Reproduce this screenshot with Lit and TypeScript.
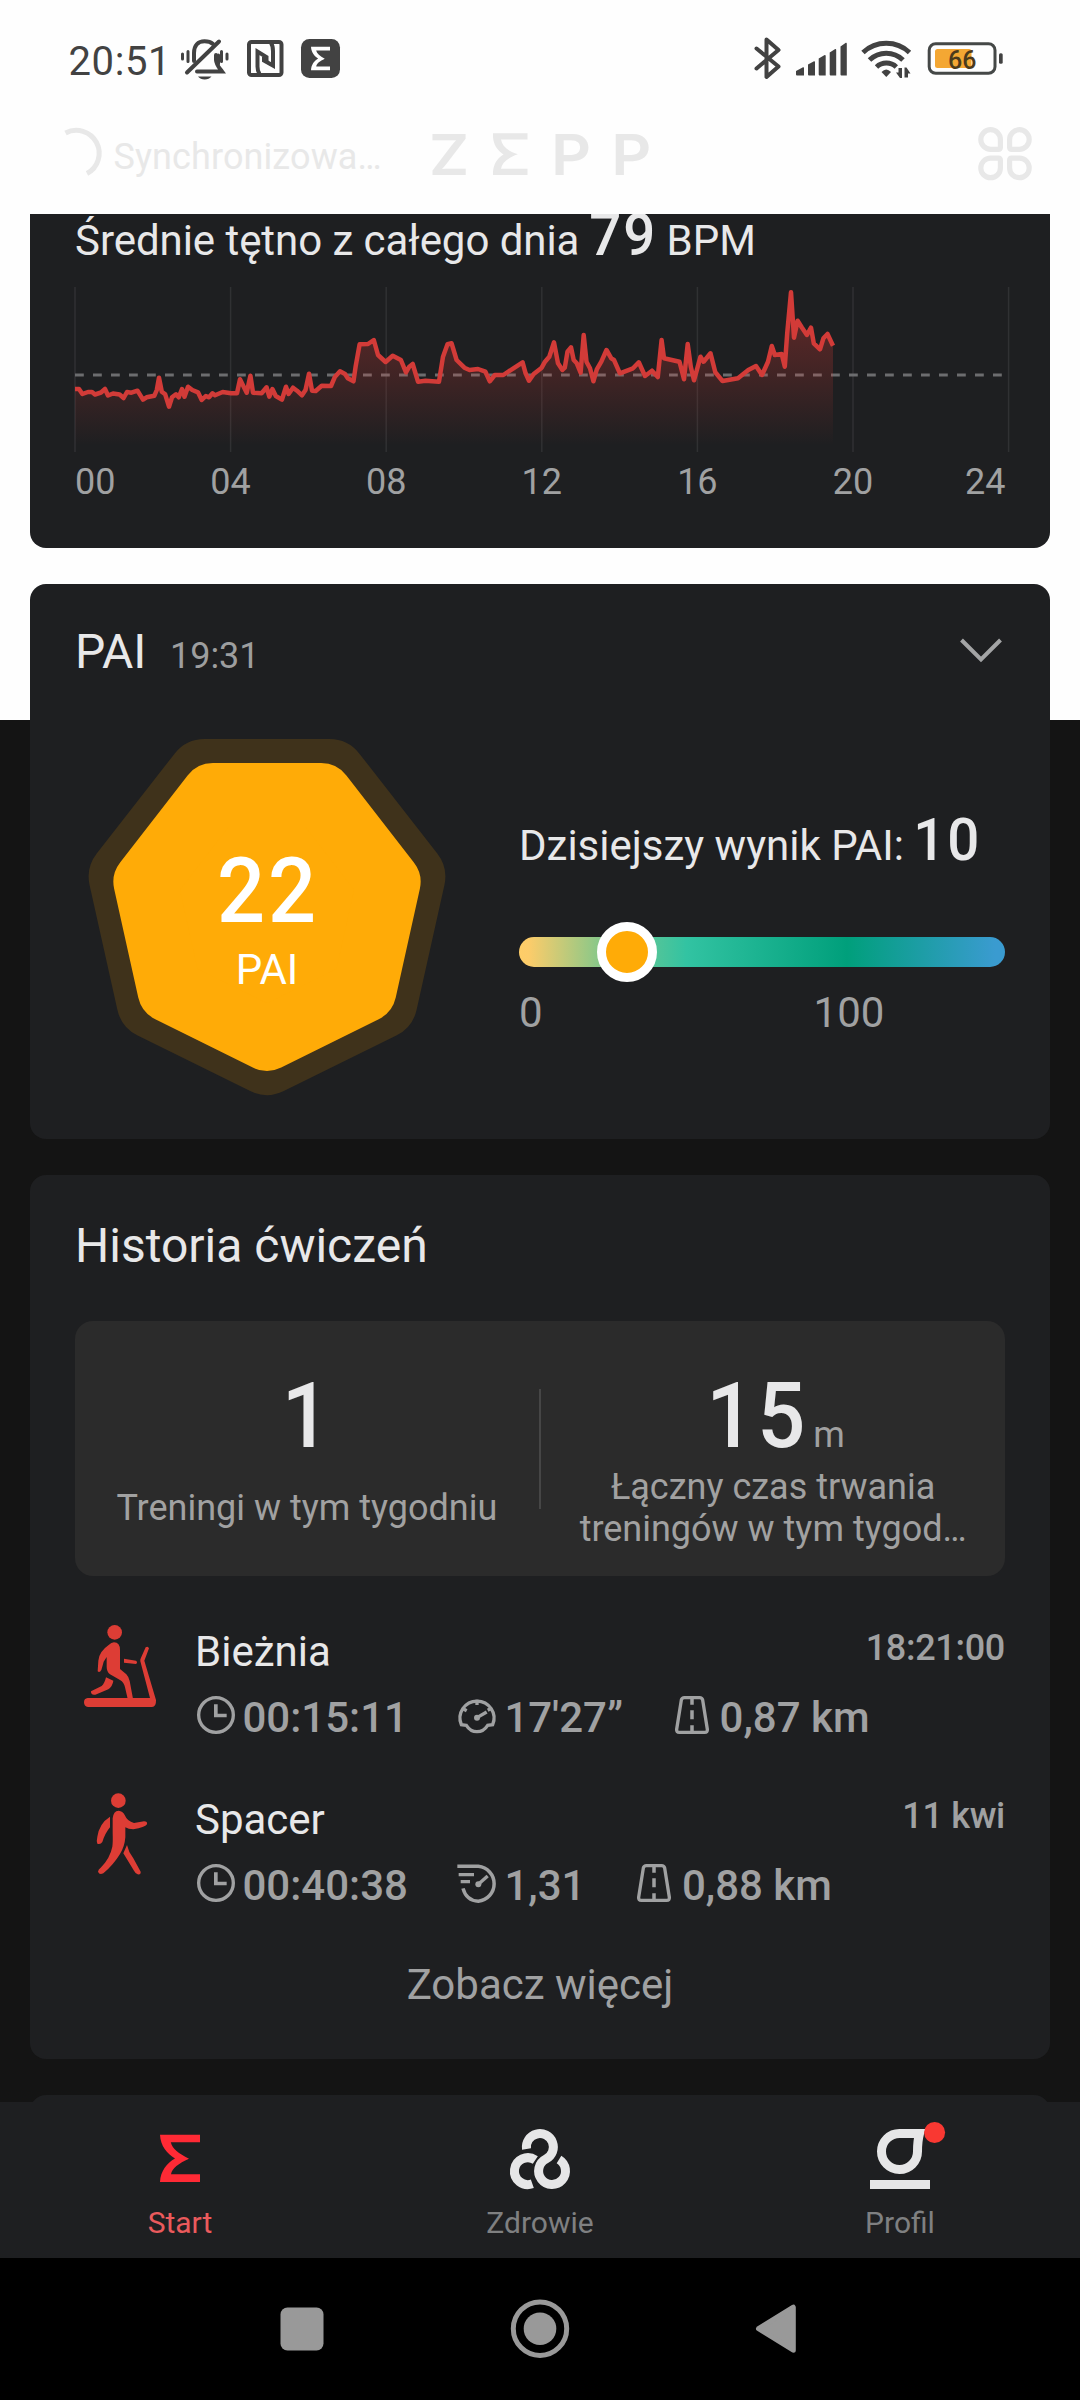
import { LitElement, html, svg, css } from "lit";
import { customElement, property } from "lit/decorators.js";

const SIGMA =
  "M20 14.7H60V22.3H30.8C32.5 29 38.5 33.5 49 38.7C38.5 43.5 32 48 31 54.3H60V62H20C20.5 51 27 43 35 38.5C27 33.5 20.5 26 20 14.7Z";

/* Heart rate samples, in chart pixels (x, y from the top of the plot). */
const HEART: number[] = [
  0,102, 4,102, 7.4,107, 13,105, 17,105, 20,107.5, 26,105.5, 30,102, 33,108.5, 38,106.5, 44.6,107.5, 48.6,111,
  52,105, 56.4,105.7, 62.5,103.7, 68,112.7, 71.6,110.3, 79.4,108.7, 81.8,103, 84,90.7, 86.8,104.7, 90.2,107.3,
  94,119.7, 97,110.3, 101,107.3, 103.7,110.3, 107,102, 109.5,109.7, 113,99.7, 117.3,103, 123,105.3, 126.7,113,
  130.8,109, 134,110.3, 137.5,106.3, 140,108.3, 147.7,105, 156,106.3, 162,106.3, 165,92.3, 168.7,99.7,
  171.7,105.7, 175.4,88.7, 178,105.7, 186.6,106.3, 191.6,100.3, 194.3,109.7, 197.4,102, 200.8,109, 206.9,112.7,
  211,99.7, 213.6,107, 218,100.7, 222,103.7, 227,108.3, 230.5,103, 234,86.7, 237,103.7, 240.7,104, 246.7,98.7,
  256,99, 260,89.7, 265,84.3, 270,87, 272.8,91.3, 278.5,94.3, 280.6,79.7, 284.6,57.3, 293,57, 298.8,53, 303,68,
  310.6,75, 317.7,68.7, 325.9,73, 331,85.3, 334.3,79.7, 337.7,77, 343,94.7, 350.5,93.7, 364,94.7, 368,69.7,
  372.5,57.3, 376.6,56.3, 381.6,73, 389.4,80.7, 394.5,83, 403,82, 410.4,84.7, 414.8,94.3, 419.8,88, 428.3,88,
  438.4,81.3, 447.6,75.3, 450.6,86.3, 454,93.7, 458.7,87, 466.7,80.7, 470,74.7, 474.3,69.7, 479,55.3, 483,76.3,
  487.4,83, 489.8,80.7, 492.5,64.7, 496,60.3, 498.7,73, 501.8,76.3, 505.6,85.7, 508.7,48, 511.5,74.7, 515,81.3,
  518.4,94.3, 521.8,82.3, 526.3,74.7, 531.5,63, 536.3,71.3, 539,73, 544.9,86.3, 558,81.3, 563.8,75.3, 570,89,
  577,83.7, 582.8,90, 586.6,53, 589,71.3, 604.5,74.7, 609,92.3, 612.7,57, 615.8,79.7, 619,93.3, 625.5,69.7,
  628.6,74.7, 635.5,66.3, 640.3,85.3, 647.5,94, 663,91.3, 673.3,83, 681,79, 687,88, 693,74.7, 696.8,59,
  699.8,68, 706.7,67, 709.8,79.7, 712.2,46.3, 716,5.2, 719,50.7, 722.6,33.7, 726.7,40.3, 731.9,48, 736,40.7,
  738.8,56.3, 745,62.3, 748.4,51.3, 752.5,47, 758,58.7,
];

const pairs = (values: number[]): string => {
  const out: string[] = [];
  for (let i = 0; i < values.length; i += 2) out.push(`${values[i]} ${values[i + 1]}`);
  return out.join("L");
};

/* Heptagon standing on a vertex; the corners are rounded by the stroke. */
const heptagon = (cx: number, cy: number, r: number, squeeze: number): string =>
  Array.from({ length: 7 }, (_, k) => {
    const a = Math.PI / 2 + (k * 2 * Math.PI) / 7;
    return `${(cx + Math.cos(a) * r * squeeze).toFixed(2)},${(cy + Math.sin(a) * r).toFixed(2)}`;
  }).join(" ");

const base = css`
  :host {
    display: block;
    font-family: Roboto, "Liberation Sans", sans-serif;
  }
  * {
    box-sizing: border-box;
  }
  svg {
    display: block;
    flex: none;
    overflow: visible;
  }
  .figure {
    display: inline-block;
    font-weight: 500;
    letter-spacing: 0.035em;
    transform: scaleX(0.94);
  }
`;

@customElement("top-header")
class TopHeader extends LitElement {
  static styles = [
    base,
    css`
      .header {
        height: 214px;
        display: flex;
        flex-direction: column;
      }
      .status {
        height: 120px;
        padding: 36px 76px 0 68.5px;
        display: flex;
        align-items: flex-start;
        color: #424242;
      }
      .time {
        width: 111.5px;
        font-size: 40px;
        line-height: 51px;
        letter-spacing: 0.6px;
      }
      .left,
      .right {
        display: flex;
      }
      .left {
        gap: 16px;
      }
      .right {
        margin-left: auto;
      }
      .signal {
        margin-left: 13px;
      }
      .wifi {
        margin-left: 12px;
      }
      .battery {
        margin-left: 14px;
      }
      .level {
        font: 500 25px Roboto, sans-serif;
      }
      .bar {
        display: flex;
        padding: 0 47px 0 64px;
        color: #e8e8e8;
      }
      .sync {
        width: 316.5px;
        margin-left: 11.5px;
        padding-top: 15.5px;
        font-size: 36px;
        line-height: 42px;
        letter-spacing: 0.1px;
        white-space: nowrap;
      }
      .apps {
        margin-left: auto;
      }
      .brand {
        font: 600 57px Inter, sans-serif;
      }
    `,
  ];

  render() {
    return html`
      <div class="header">
        <div class="status">
          <div class="time">20:51</div>
          <div class="left">
            <svg width="50" height="46" viewBox="180 36 50 46" fill="none" stroke="currentColor" stroke-width="4" stroke-linecap="round">
              <path d="M194 61V53C194 45.500 198 41.200 204.500 41.200C208 41.200 211 42.200 213 44" />
              <path d="M216 55V60C216.300 65 219 67.500 222 71.500H197" />
              <path d="M218.500 55V64" stroke-width="3" />
              <path d="M219 41.500L187 72.500" />
              <path d="M198 76.500H211.500Q209 79.500 204.700 79.500T198 76.500Z" fill="currentColor" stroke="none" />
              <path d="M182.500 54V59M188 51.500V61.500M221.500 51.500V61.500M227 54V59" stroke-width="3" />
            </svg>
            <svg width="38" height="46" viewBox="246 36 38 46" fill="none" stroke="currentColor" stroke-width="4">
              <rect x="249" y="42" width="32.500" height="33" rx="2.500" />
              <path d="M259.500 74C257.400 71 257.500 69 257.500 66V51.500L266.500 57V61.500" />
              <path d="M271 43C273.200 46 273 49 273 52V65.500L264 60.500V57" />
            </svg>
            <svg width="41" height="46" viewBox="300 36 41 46">
              <rect x="301" y="39" width="39" height="39" rx="8.500" fill="currentColor" />
              <path transform="translate(301.500 39.500) scale(.475 .495)" d=${SIGMA} fill="#fff" />
            </svg>
          </div>
          <div class="right">
            <svg width="29" height="46" viewBox="753 36 29 46" fill="none" stroke="currentColor" stroke-width="4" stroke-linejoin="round" stroke-linecap="round">
              <path d="M756.500 48.500L778.500 66.500L766.500 77V39.500L778.500 50L756.500 68.500" />
            </svg>
            <svg class="signal" width="53" height="46" viewBox="795 36 53 46" fill="currentColor">
              <path d="M796 71L803 67.300Q804 67 804 68V75.500H797Q796 75.500 796 74.500ZM808 64.500L814 61.200Q815 61 815 62V75.500H809Q808 75.500 808 74.500ZM818.700 58.500L824.700 55Q825.700 54.800 825.700 56V75.500H819.700Q818.700 75.500 818.700 74.500ZM829.700 52.500L835.200 49Q836.200 48.800 836.200 50V75.500H830.700Q829.700 75.500 829.700 74.500ZM840.500 46.500L845.800 42.800Q846.800 42.500 846.800 43.800V75.500H841.500Q840.500 75.500 840.500 74.500Z" />
            </svg>
            <svg class="wifi" width="52" height="46" viewBox="860 36 52 46" fill="none" stroke="currentColor" stroke-width="5">
              <path d="M863 52.500A34 34 0 0 1 909.500 52.500M869.500 60A24 24 0 0 1 903 60M876.500 67A14.500 14.500 0 0 1 896.300 67" />
              <path d="M881.500 72Q886.300 67 891 72L886.300 77Z" fill="currentColor" stroke="none" />
              <path d="M902 68V78H900L896 72.500H898.500V68ZM904.500 77.500V67.500H906.500L910.500 73.500H908V77.500Z" fill="currentColor" stroke="none" />
            </svg>
            <svg class="battery" width="78" height="46" viewBox="926 36 78 46">
              <rect x="935" y="49" width="36.500" height="19" rx="2.500" fill="#f4a733" />
              <rect x="929.200" y="43.700" width="65.800" height="29.600" rx="6.500" fill="none" stroke="#454847" stroke-width="3" />
              <rect x="999" y="53.300" width="3.700" height="10.400" rx="1.500" fill="currentColor" />
              <text class="level" x="962.300" y="69" text-anchor="middle" fill="#4b3a1c">66</text>
            </svg>
          </div>
        </div>
        <div class="bar">
          <svg width="38" height="64" viewBox="64 120 38 64" fill="none" stroke="currentColor" stroke-width="5">
            <path d="M65.500 133A22.500 22.500 0 0 1 87 173.500" />
          </svg>
          <div class="sync">Synchronizowa…</div>
          <svg width="222" height="64" viewBox="430 120 222 64" fill="currentColor">
            <text class="brand" transform="translate(429 175) scale(1.080 1)">Z</text>
            <path d="M493 133.300H527.500V139.500H501C502 146 507.500 151 517.800 154.300C507.500 158 502 163 501 168.800H527.500V175H493V172C493.500 164 497 158.500 503.500 154.500C497 150 493.500 144.500 493 137Z" />
            <text class="brand" transform="translate(551 175) scale(1.090 1)">P</text>
            <text class="brand" transform="translate(611.300 175) scale(1.090 1)">P</text>
          </svg>
          <svg class="apps" width="56" height="64" viewBox="977 120 56 64" fill="none" stroke="currentColor" stroke-width="5.200">
            ${[[1, 1], [-1, 1], [1, -1], [-1, -1]].map(
              ([sx, sy]) => svg`<path transform="translate(1005 153.700) scale(${sx} ${sy})"
                d="M-4.600 -14.200A9.800 9.800 0 1 0 -14.400 -4.400H-6.500Q-4.600 -4.400 -4.600 -6.300Z" />`
            )}
          </svg>
        </div>
      </div>
    `;
  }
}

@customElement("heart-card")
class HeartCard extends LitElement {
  static styles = [
    base,
    css`
      .card {
        height: 334px;
        padding: 0 45px;
        overflow: hidden;
        background: #1e1f21;
        border-radius: 0 0 16px 16px;
        color: #e8e8e9;
      }
      .title {
        height: 82.5px;
        margin-top: -9.5px;
        font-size: 42px;
        line-height: 60px;
        letter-spacing: -0.05px;
        white-space: nowrap;
      }
      .bpm {
        margin: 0 -3px 0 -3px;
        font-size: 60px;
      }
      .hours {
        display: grid;
        grid-template-columns: 77.8px repeat(5, 155.6px) 74.8px;
        margin-top: 9px;
        font-size: 36px;
        line-height: 42px;
        color: #a0a1a2;
        text-align: center;
      }
      .hours span:first-child {
        text-align: left;
      }
      .hours span:last-child {
        text-align: right;
      }
    `,
  ];

  render() {
    const line = pairs(HEART);
    return html`
      <div class="card">
        <div class="title">Średnie tętno z całego dnia <span class="bpm figure">79</span> BPM</div>
        <svg width="930" height="165" viewBox="0 0 930 165">
          <defs>
            <linearGradient id="fade" x1="0" y1="0" x2="0" y2="158" gradientUnits="userSpaceOnUse">
              <stop offset="0" stop-color="#e23b35" stop-opacity=".38" />
              <stop offset=".55" stop-color="#e23b35" stop-opacity=".18" />
              <stop offset="1" stop-color="#e23b35" stop-opacity="0" />
            </linearGradient>
          </defs>
          ${Array.from({ length: 7 }, (_, i) => i * 155.6).map(
            (x) => svg`<path d="M${x} 0V165" stroke="#303133" stroke-width="1.500" />`
          )}
          <path d="M0 88H928" stroke="#6c6d6f" stroke-width="2.800" stroke-dasharray="8.800 9.200" />
          <path d="M0 158L${line}V158Z" fill="url(#fade)" />
          <path d="M${line}" fill="none" stroke="#d23b38" stroke-width="4.500" stroke-linejoin="round" />
        </svg>
        <div class="hours">
          ${["00", "04", "08", "12", "16", "20", "24"].map((h) => html`<span>${h}</span>`)}
        </div>
      </div>
    `;
  }
}

@customElement("pai-card")
class PaiCard extends LitElement {
  static styles = [
    base,
    css`
      .card {
        height: 555px;
        padding: 38px 45px 0;
        background: #1e1f21;
        border-radius: 16px;
        color: #e8e8e9;
      }
      .head {
        display: flex;
        align-items: baseline;
        height: 60px;
        line-height: 60px;
      }
      .name {
        font-size: 48px;
      }
      .at {
        margin-left: 23.5px;
        font-size: 36px;
        color: #9d9e9f;
      }
      .chevron {
        align-self: flex-start;
        margin: 16px 3px 0 auto;
      }
      .body {
        display: flex;
        margin-top: 57px;
        padding-left: 13px;
      }
      .badge {
        display: grid;
        width: 358px;
        height: 356px;
      }
      .badge > * {
        grid-area: 1 / 1;
      }
      .score {
        padding-top: 103px;
        text-align: center;
        color: #fff;
      }
      .points {
        display: block;
        padding-left: 2px;
        font-size: 90px;
        line-height: 100px;
      }
      .unit {
        margin-top: 2.5px;
        font-size: 42px;
        line-height: 50px;
      }
      .today {
        width: 486px;
        margin-left: 73px;
        padding-top: 71px;
      }
      .result {
        height: 66px;
        font-size: 42px;
        line-height: 60px;
        white-space: nowrap;
      }
      .value {
        margin-left: -3px;
        font-size: 60px;
      }
      .track {
        position: relative;
        height: 30px;
        margin-top: 61px;
        border-radius: 15px;
        background: linear-gradient(90deg, #fecd68 0, #fccc6a 2%, #8cc888 16%, #32c3a2 34.5%, #009f7b 67.5%, #3a9bd0 98%);
      }
      .thumb {
        position: absolute;
        top: -15px;
        width: 60px;
        height: 60px;
        margin-left: -30px;
        border: 9px solid #fff;
        border-radius: 50%;
        background: #ffab07;
      }
      .scale {
        display: flex;
        gap: 271px;
        margin-top: 20.5px;
        font-size: 42px;
        line-height: 50px;
        color: #a0a1a2;
      }
    `,
  ];

  render() {
    return html`
      <div class="card">
        <div class="head">
          <span class="name">PAI</span>
          <span class="at">19:31</span>
          <svg class="chevron" width="42" height="24" viewBox="0 0 42 24" fill="none" stroke="#a3a4a5" stroke-width="4">
            <path d="M1.500 2L21 21.500L40.500 2" />
          </svg>
        </div>
        <div class="body">
          <div class="badge">
            <svg width="358" height="356" viewBox="88 739 358 356" stroke-linejoin="round">
              <polygon points=${heptagon(267, 909.7, 147.3, 0.977)} fill="#3f321b" stroke="#3f321b" stroke-width="76" />
              <polygon points=${heptagon(267, 910.6, 128.3, 0.972)} fill="#ffab07" stroke="#ffab07" stroke-width="64" />
            </svg>
            <div class="score">
              <div class="points figure">22</div>
              <div class="unit">PAI</div>
            </div>
          </div>
          <div class="today">
            <div class="result">Dzisiejszy wynik PAI: <span class="value figure">10</span></div>
            <div class="track"><div class="thumb" style="left: 22.2%"></div></div>
            <div class="scale"><span>0</span><span>100</span></div>
          </div>
        </div>
      </div>
    `;
  }
}

const METRIC_ICONS: Record<string, unknown> = {
  clock: svg`
    <circle cx="63" cy="60" r="52" stroke-width="10" />
    <path d="M62.500 28V61.500H95" stroke-width="11" />`,
  pace: svg`
    <path d="M28 91L13 89A51 51 0 1 1 107 89L92 91Q80 110 60 110T28 91Z" stroke-width="10" />
    <path d="M60 14V30M16 40L29 47M104 40L92 46" stroke-width="10" />
    <path d="M60 68L89 51" stroke-width="10" />
    <circle cx="60" cy="68" r="9" fill="currentColor" stroke="none" />`,
  speed: svg`
    <path d="M1 10H64A52.500 52.500 0 0 1 64 114.500Q28 113 18 76" stroke-width="10.500" />
    <path d="M5 35H51M11 56H39" stroke-width="10" />
    <path d="M64 64L92 39" stroke-width="10" />
    <circle cx="64" cy="64" r="9" fill="currentColor" stroke="none" />`,
  road: svg`
    <path d="M37 8H83Q90 8 92 15L106 103Q107 112 98 112H22Q13 112 14 103L28 15Q30 8 37 8Z" stroke-width="10" />
    <path d="M60 8V29M60 46V73M60 91V112" stroke-width="10.500" />`,
};

const SPORT_ICONS: Record<string, unknown> = {
  treadmill: svg`<g transform="translate(-72 -75)">
    <circle cx="164" cy="97" r="22" />
    <path d="M146 135Q154 127 162 127Q180 128 180 150V207L199 223Q206 230 209 243L219 296H203L195 262Q192 247 180 240L150 223Q140 215 140 200V171L131 185Q127 200 124 210Q119 219 113 214L115 182Q117 155 146 135Z" />
    <path d="M138 232L160 242Q158 258 145 268L106 284Q92 286 93 274L125 258Q134 250 138 232Z" />
    <path d="M192 176L228 182Q234 187 228 192L192 188Z" />
    <path d="M83 294H270L241 184Q240 178 243 173L257 142Q264 137 267 145L253 182L288 300Q289 320 276 321H84Q72 319 72 307T83 294Z" />
  </g>`,
  walk: svg`<g transform="translate(-72 -579)">
    <circle cx="175" cy="602" r="22" />
    <path d="M158 655Q160 633 176 632Q188 633 194 645Q202 664 222 669L252 664Q263 664 261 673Q255 682 220 688Q205 688 196 682V712Q194 740 180 762Q160 795 130 820Q118 826 114 815Q115 808 122 803Q150 775 157 740Q159 725 158 700Z" />
    <path d="M150 650V682Q135 700 127 726Q122 734 112 731Q109 722 112 710Q118 670 150 650Z" />
    <path d="M201 735Q205 755 220 775L242 815Q243 825 233 823Q226 820 222 812L190 760Z" />
  </g>`,
};

interface Workout {
  sport: string;
  name: string;
  when: string;
  metrics: [string, string][];
}

@customElement("workout-row")
class WorkoutRow extends LitElement {
  @property({ attribute: false }) item!: Workout;

  static styles = [
    base,
    css`
      .row {
        display: flex;
        height: 168px;
        padding-left: 9px;
      }
      .info {
        flex: 1;
        margin-left: 39px;
        padding-top: 1.7px;
      }
      .line {
        display: flex;
        justify-content: space-between;
      }
      .name {
        font-size: 42px;
        line-height: 50px;
        color: #e8e8e9;
      }
      .when {
        font-size: 36px;
        line-height: 42px;
        font-weight: 500;
        letter-spacing: -0.3px;
        color: #a0a1a2;
      }
      .metrics {
        display: flex;
        gap: 49px;
        margin-top: 18px;
        font-size: 42px;
        line-height: 45px;
        font-weight: 500;
        color: #a0a1a2;
      }
      .metric {
        display: flex;
        gap: 7.5px;
        white-space: nowrap;
      }
    `,
  ];

  render() {
    const { sport, name, when, metrics } = this.item;
    return html`
      <div class="row">
        <svg width="72" height="82" viewBox="0 0 216 246" fill="#dd3d35">${SPORT_ICONS[sport]}</svg>
        <div class="info">
          <div class="line"><span class="name">${name}</span><span class="when">${when}</span></div>
          <div class="metrics">
            ${metrics.map(
              ([icon, text]) => html`<div class="metric">
                <svg width="40" height="40" viewBox="0 0 120 120" fill="none" stroke="currentColor">${METRIC_ICONS[icon]}</svg>
                <span>${text}</span>
              </div>`
            )}
          </div>
        </div>
      </div>
    `;
  }
}

@customElement("history-card")
class HistoryCard extends LitElement {
  private workouts: Workout[] = [
    {
      sport: "treadmill",
      name: "Bieżnia",
      when: "18:21:00",
      metrics: [["clock", "00:15:11"], ["pace", "17'27”"], ["road", "0,87 km"]],
    },
    {
      sport: "walk",
      name: "Spacer",
      when: "11 kwi",
      metrics: [["clock", "00:40:38"], ["speed", "1,31"], ["road", "0,88 km"]],
    },
  ];

  static styles = [
    base,
    css`
      .card {
        height: 884px;
        padding: 40.5px 45px 0;
        background: #1e1f21;
        border-radius: 16px;
      }
      .title {
        font-size: 48px;
        line-height: 60px;
        color: #e8e8e9;
      }
      .summary {
        display: flex;
        align-items: center;
        height: 255px;
        margin: 45.5px 0 49px;
        border-radius: 18px;
        background: #2b2b2b;
      }
      .total {
        flex: 1;
        align-self: flex-start;
        padding-top: 48px;
        text-align: center;
      }
      .number {
        display: flex;
        align-items: baseline;
        justify-content: center;
        gap: 2px;
        height: 97px;
        padding-left: 1px;
        font-size: 90px;
        line-height: 96px;
        color: #e8e8e9;
      }
      .unit {
        font-size: 36px;
        color: #a1a1a1;
      }
      .label {
        display: flex;
        align-items: center;
        justify-content: center;
        height: 84px;
        font-size: 36px;
        line-height: 42px;
        color: #a1a1a1;
        white-space: nowrap;
      }
      .divider {
        width: 2.5px;
        height: 120px;
        background: #464646;
      }
      .more {
        margin-top: -1px;
        font-size: 42px;
        line-height: 50px;
        color: #a0a1a2;
        text-align: center;
      }
    `,
  ];

  render() {
    return html`
      <div class="card">
        <div class="title">Historia ćwiczeń</div>
        <div class="summary">
          <div class="total">
            <div class="number"><span class="figure">1</span></div>
            <div class="label">Treningi w tym tygodniu</div>
          </div>
          <div class="divider"></div>
          <div class="total">
            <div class="number"><span class="figure">15</span><span class="unit">m</span></div>
            <div class="label"><span>Łączny czas trwania<br />treningów w tym tygod…</span></div>
          </div>
        </div>
        ${this.workouts.map((w) => html`<workout-row .item=${w}></workout-row>`)}
        <div class="more">Zobacz więcej</div>
      </div>
    `;
  }
}

@customElement("tab-bar")
class TabBar extends LitElement {
  static styles = [
    base,
    css`
      .tabs {
        display: grid;
        grid-template-columns: repeat(3, 1fr);
        height: 156px;
        padding-top: 18px;
        background: #1e1f21;
      }
      .tab {
        display: flex;
        flex-direction: column;
        align-items: center;
        gap: 8.5px;
        font-size: 30px;
        line-height: 36px;
        color: #7f8081;
      }
      .active {
        color: #ea5a5c;
      }
    `,
  ];

  render() {
    return html`
      <div class="tabs">
        <div class="tab active">
          <svg width="80" height="76" viewBox="0 0 80 76"><path d=${SIGMA} fill="#ff2a35" /></svg>
          <span>Start</span>
        </div>
        <div class="tab">
          <svg width="80" height="76" viewBox="0 0 80 76" fill="none" stroke="#e6e6e7">
            <g transform="translate(-10 -10) scale(.33333)" stroke-width="27">
              <path d="M109.500 117A40.500 40.300 0 1 1 168 147A40.300 40.300 0 1 0 207 148.500" />
              <path d="M127 221.500A40.300 40.300 0 1 1 136 150" />
            </g>
          </svg>
          <span>Zdrowie</span>
        </div>
        <div class="tab">
          <svg width="80" height="76" viewBox="0 0 80 76">
            <path d="M59.500 13.500H39.700A18 18 0 1 0 57.500 31.500C57.500 24 58.300 18 59.500 13.500Z" fill="none" stroke="#e6e6e7" stroke-width="9" />
            <rect x="10" y="60" width="60" height="9" fill="#e6e6e7" />
            <circle cx="74.600" cy="12.500" r="10.500" fill="#f93832" />
          </svg>
          <span>Profil</span>
        </div>
      </div>
    `;
  }
}

@customElement("system-nav")
class SystemNav extends LitElement {
  static styles = [
    base,
    css`
      .nav {
        display: flex;
        justify-content: center;
        gap: 178px;
        height: 142px;
        padding-top: 41px;
        background: #000;
      }
    `,
  ];

  render() {
    return html`
      <div class="nav">
        <svg width="60" height="60" viewBox="0 0 60 60" fill="#999"><rect x="8.500" y="8.500" width="43" height="43" rx="7" /></svg>
        <svg width="60" height="60" viewBox="0 0 60 60" fill="#999">
          <circle cx="30" cy="29.700" r="26.700" fill="none" stroke="#999" stroke-width="5" />
          <circle cx="30" cy="29.700" r="16.300" />
        </svg>
        <svg width="60" height="60" viewBox="0 0 60 60" fill="#999" stroke="#999" stroke-width="5" stroke-linejoin="round">
          <path d="M10.500 29.700L45.300 8.200V51.200Z" />
        </svg>
      </div>
    `;
  }
}

@customElement("app-root")
class AppRoot extends LitElement {
  static styles = [
    base,
    css`
      .screen {
        display: flex;
        flex-direction: column;
        width: 1080px;
        height: 2400px;
        overflow: hidden;
        background: linear-gradient(#fefefe 720px, #141414 720px);
      }
      .feed {
        display: flex;
        flex-direction: column;
        gap: 36px;
        height: 1888px;
        padding: 0 30px;
        overflow: hidden;
      }
      .next {
        flex: none;
        height: 200px;
        border-radius: 16px;
        background: #1e1f21;
      }
    `,
  ];

  render() {
    return html`
      <div class="screen">
        <top-header></top-header>
        <div class="feed">
          <heart-card></heart-card>
          <pai-card></pai-card>
          <history-card></history-card>
          <div class="next"></div>
        </div>
        <tab-bar></tab-bar>
        <system-nav></system-nav>
      </div>
    `;
  }
}
